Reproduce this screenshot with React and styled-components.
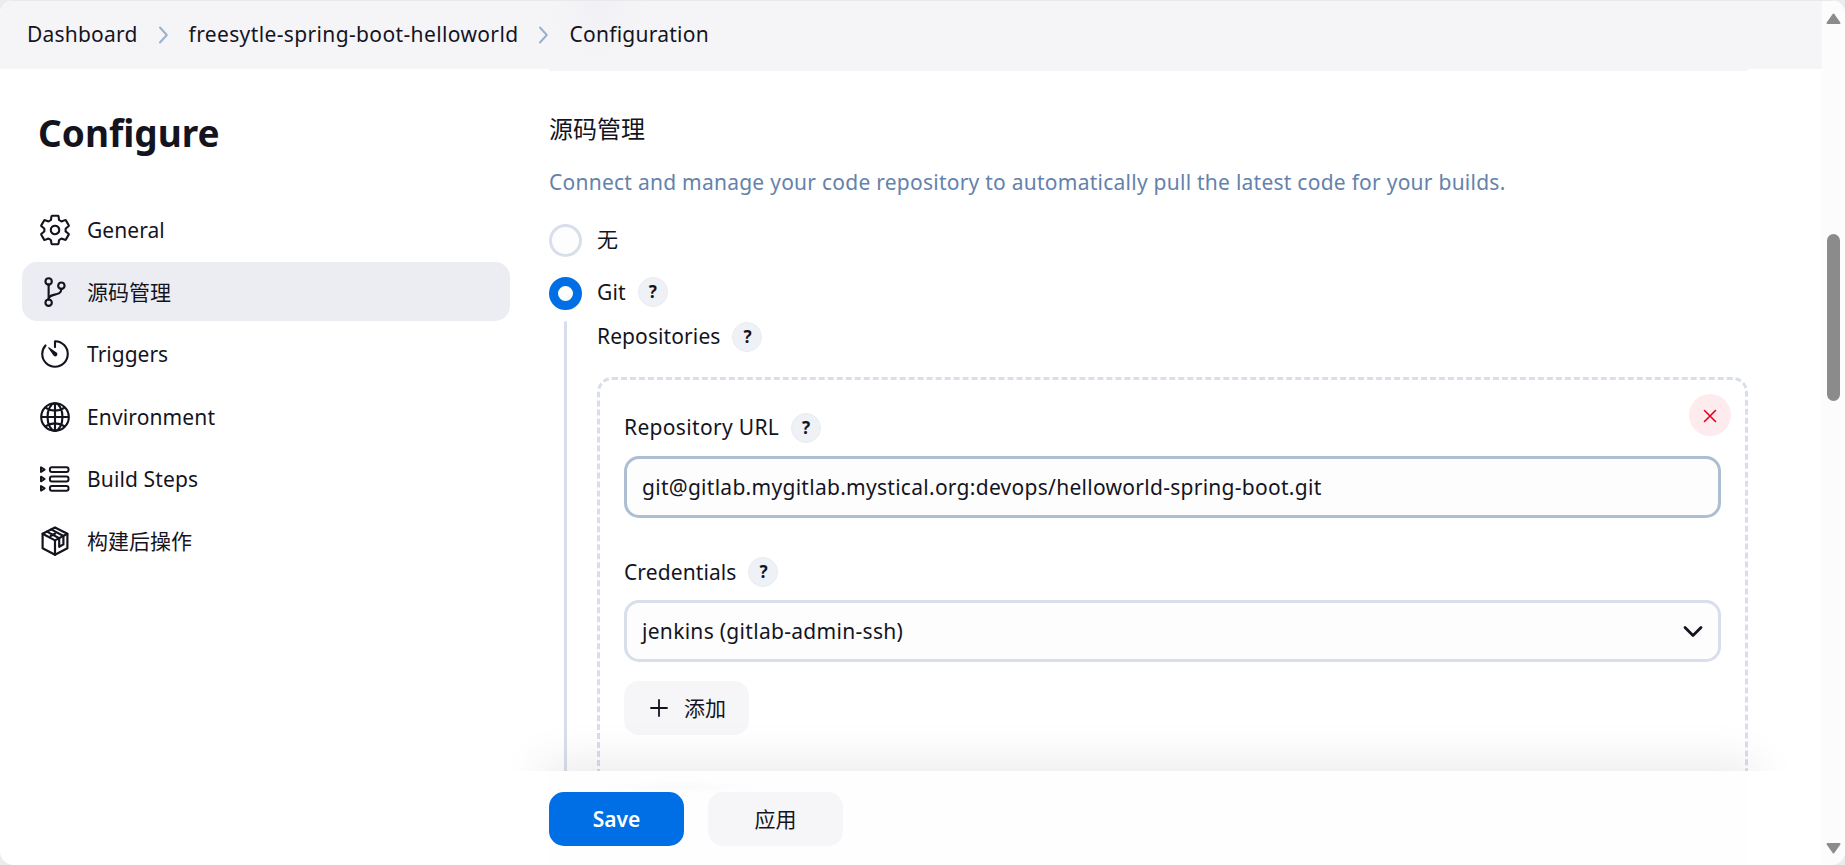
import React from "react";
import styled, { createGlobalStyle, css } from "styled-components";
import {
  IoSettingsOutline,
  IoGitBranchOutline,
  IoTimerOutline,
  IoGlobeOutline,
} from "react-icons/io5";

const ink = "#14141f";
const line = "#d8dfea";
const accent = "#006fe6";

const GlobalStyle = createGlobalStyle`
  *, *::before, *::after { box-sizing: border-box; }
  body {
    margin: 0;
    background: #ececee;
    color: ${ink};
    font-family: "Noto Sans", "Noto Sans CJK SC", sans-serif;
    font-size: 21px;
    line-height: 28px;
  }
`;

const Window = styled.div`
  display: flex;
  width: 1845px;
  height: 865px;
  overflow: hidden;
  background: #fff;
  border-radius: 14px;
`;

const Page = styled.div`
  display: flex;
  flex-direction: column;
  flex: 1;
  min-width: 0;
`;

const Text = styled.span`
  white-space: nowrap;
  letter-spacing: ${(p) => p.$track || 0}px;
`;

const Breadcrumbs = styled.header`
  display: flex;
  align-items: center;
  flex: none;
  height: 69px;
  padding: 0 0 2px 27px;
  border-top: 1px solid #e9e9ec;
  background: radial-gradient(circle at 598px 8px, #f1f1f5 0, #f5f5f8 46px);
`;

const CrumbArrow = styled.svg`
  width: 11px;
  height: 18px;
  margin: 1px 20px 0;
  fill: none;
  stroke: #9bb0ca;
  stroke-width: 2;
  stroke-linecap: round;
  stroke-linejoin: round;
`;

const Body = styled.div`
  display: flex;
  flex: 1;
  min-height: 0;
`;

const Sidebar = styled.aside`
  flex: none;
  width: 549px;
  padding: 39px 39px 0 22px;
`;

const Heading = styled.h1`
  margin: 0 0 42px;
  padding-left: 16px;
  font-size: 37px;
  font-weight: 700;
  line-height: 50px;
`;

const Nav = styled.nav`
  display: flex;
  flex-direction: column;
  gap: 3.4px;
`;

const NavItem = styled.a`
  display: flex;
  align-items: center;
  gap: 15px;
  height: 59px;
  padding-left: 16px;
  border-radius: 15px;
  background: ${(p) => (p.$active ? "#ecedf3" : "transparent")};

  svg {
    flex: none;
    width: 34px;
    height: 34px;
  }
`;

const Main = styled.main`
  display: flex;
  flex-direction: column;
  width: 1199px;
`;

const Scroll = styled.div`
  flex: 1;
  min-height: 0;
  overflow: hidden;
  border-top: 2px solid #f4f4f9;
`;

const SectionTitle = styled.h2`
  margin: 42px 0 22px;
  font-size: 24px;
  font-weight: 400;
  line-height: 32px;
`;

const Description = styled.p`
  margin: 0 0 27px;
  line-height: 30px;
  color: #6482aa;
`;

const RadioRow = styled.div`
  display: flex;
  gap: 15px;
  height: 33px;
  margin-bottom: ${(p) => p.$below}px;
`;

const Radio = styled.span`
  flex: none;
  width: 33px;
  height: 33px;
  border-radius: 50%;
  background: #fdfdfd;
  border: ${(p) => (p.$checked ? `9.5px solid ${accent}` : `3px solid ${line}`)};
`;

const LabelRow = styled.div`
  display: flex;
  align-items: center;
  gap: 12px;
  height: 30px;

  ${Text} {
    margin-bottom: ${(p) => (p.$level ? 0 : 2)}px;
  }
`;

const Help = styled.button`
  flex: none;
  width: 30px;
  height: 30px;
  padding: 0;
  border: 1px solid #e8ecf1;
  border-radius: 50%;
  background: #eef1f5;
  color: ${ink};
  font: 700 17px/28px "Noto Sans", sans-serif;
  text-align: center;
`;

const Nested = styled.div`
  display: flex;
  gap: 30px;
  height: 620px;
  margin-left: 15px;

  &::before {
    content: "";
    width: 3px;
    border-radius: 2px 2px 0 0;
    background: ${line};
  }
`;

const NestedContent = styled.div`
  flex: 1;
  padding-top: 1px;
`;

const Repository = styled.section`
  position: relative;
  height: 560px;
  margin-top: 25px;
  padding: 33px 24px;
  border: 3px dashed ${line};
  border-radius: 15px;
`;

const RemoveButton = styled.button`
  position: absolute;
  top: 14px;
  right: 14px;
  display: grid;
  place-items: center;
  width: 42px;
  height: 42px;
  padding: 1px 0 0;
  border: 0;
  border-radius: 50%;
  background: #fdebed;

  svg {
    width: 14px;
    height: 14px;
    stroke: #e6001f;
    stroke-width: 1.6;
    stroke-linecap: round;
  }
`;

const fieldBox = css`
  display: flex;
  align-items: center;
  justify-content: space-between;
  height: 62px;
  margin-top: 13px;
  padding: 0 15px 0 15px;
  border: 3px solid ${(p) => (p.$focused ? "#adbdd2" : line)};
  border-radius: 15px;
  background: #fdfdfd;
`;

const TextField = styled.div`
  ${fieldBox}
  margin-bottom: 39px;
`;

const SelectField = styled.div`
  ${fieldBox}
  margin-bottom: 19px;

  svg {
    width: 20px;
    height: 13px;
    fill: none;
    stroke: ${ink};
    stroke-width: 2.8;
    stroke-linecap: round;
    stroke-linejoin: round;
  }
`;

const Button = styled.button`
  display: inline-flex;
  align-items: center;
  justify-content: center;
  gap: 16px;
  width: ${(p) => p.$width}px;
  height: 54px;
  padding: 0 0 0 ${(p) => p.$inset || 0}px;
  border: 0;
  border-radius: 15px;
  background: ${(p) => (p.$primary ? accent : "#f6f6f9")};
  color: ${(p) => (p.$primary ? "#fff" : ink)};
  font: inherit;
  font-weight: ${(p) => (p.$primary ? 600 : 400)};

  svg {
    width: 18px;
    height: 18px;
    stroke: ${ink};
    stroke-width: 1.8;
    stroke-linecap: round;
  }
`;

const ActionBar = styled.footer`
  position: relative;
  display: flex;
  flex: none;
  gap: 24px;
  height: 94px;
  padding-top: 21px;
  background: radial-gradient(ellipse at 130px 16px, #fafafa 0, #fefefe 90px);

  &::before {
    content: "";
    position: absolute;
    inset: 0;
    box-shadow: 0 0 46px 8px rgba(0, 0, 0, 0.085);
    clip-path: inset(-60px -60px 100% -60px);
    pointer-events: none;
  }
`;

const ScrollTrack = styled.div`
  display: flex;
  flex-direction: column;
  align-items: center;
  flex: none;
  width: 23px;
  padding: 12px 0 11px;
  background: #fcfcfc;
  border-top: 1px solid #e9e9ec;

  svg {
    width: 15px;
    height: 12px;
    fill: #8b8b8b;
    stroke: #8b8b8b;
    stroke-width: 2;
    stroke-linejoin: round;
  }
`;

const Thumb = styled.div`
  width: 13px;
  height: 167px;
  margin: 209px 0 auto;
  border-radius: 7px;
  background: #8b8b8b;
`;

function Separator() {
  return (
    <CrumbArrow viewBox="0 0 11 18">
      <path d="M2 1.5 8.8 9 2 16.5" />
    </CrumbArrow>
  );
}

function BuildStepsIcon() {
  return (
    <svg viewBox="0 0 34 34" fill="none" stroke={ink} strokeWidth="2" strokeLinejoin="round">
      {[7.7, 17, 26.3].map((y) => (
        <g key={y}>
          <path d={`M3 ${y - 2.3}V${y + 2.3}L6.6 ${y}Z`} />
          <rect x="11.9" y={y - 2.4} width="18.6" height="4.8" rx="2" />
        </g>
      ))}
    </svg>
  );
}

function PackageIcon() {
  return (
    <svg viewBox="0 0 34 34" fill="none" stroke={ink} strokeWidth="2.2" strokeLinejoin="round" strokeLinecap="round">
      <path d="M17 3.4 29.4 9.8V24.2L17 30.8 4.6 24.2V9.8Z" />
      <path d="M4.6 9.8 17 16.4 29.4 9.8M17 16.4V30.8" />
      <path d="M13.2 5.4 25.4 12V20.4L21.2 22.8V14.2L9 7.6" />
      <path d="M17.2 9.6 12.6 12" />
    </svg>
  );
}

const navItems = [
  { label: "General", track: 0.05, icon: <IoSettingsOutline /> },
  { label: "源码管理", icon: <IoGitBranchOutline />, active: true },
  { label: "Triggers", icon: <IoTimerOutline /> },
  { label: "Environment", track: 0.13, icon: <IoGlobeOutline /> },
  { label: "Build Steps", track: 0.13, icon: <BuildStepsIcon /> },
  { label: "构建后操作", icon: <PackageIcon /> },
];

export default function App() {
  return (
    <>
      <GlobalStyle />
      <Window>
        <Page>
          <Breadcrumbs>
            <Text $track={0.2}>Dashboard</Text>
            <Separator />
            <Text $track={0.37}>freesytle-spring-boot-helloworld</Text>
            <Separator />
            <Text $track={0.25}>Configuration</Text>
          </Breadcrumbs>
          <Body>
            <Sidebar>
              <Heading>Configure</Heading>
              <Nav>
                {navItems.map((item) => (
                  <NavItem key={item.label} $active={item.active}>
                    {item.icon}
                    <Text $track={item.track}>{item.label}</Text>
                  </NavItem>
                ))}
              </Nav>
            </Sidebar>
            <Main>
              <Scroll>
                <SectionTitle>源码管理</SectionTitle>
                <Description>
                  <Text $track={0.25}>
                    Connect and manage your code repository to automatically pull the latest code for your builds.
                  </Text>
                </Description>
                <RadioRow $below={20}>
                  <Radio />
                  <LabelRow $level>
                    <Text>无</Text>
                  </LabelRow>
                </RadioRow>
                <RadioRow $below={11}>
                  <Radio $checked />
                  <LabelRow $level>
                    <Text $track={0.2}>Git</Text>
                    <Help>?</Help>
                  </LabelRow>
                </RadioRow>
                <Nested>
                  <NestedContent>
                    <LabelRow>
                      <Text $track={0.1}>Repositories</Text>
                      <Help>?</Help>
                    </LabelRow>
                    <Repository>
                      <RemoveButton>
                        <svg viewBox="0 0 14 14">
                          <path d="M1.5 1.5l11 11M12.5 1.5l-11 11" />
                        </svg>
                      </RemoveButton>
                      <LabelRow>
                        <Text $track={0.33}>Repository URL</Text>
                        <Help>?</Help>
                      </LabelRow>
                      <TextField $focused>
                        <Text $track={0.28}>git@gitlab.mygitlab.mystical.org:devops/helloworld-spring-boot.git</Text>
                      </TextField>
                      <LabelRow $level>
                        <Text $track={0.1}>Credentials</Text>
                        <Help>?</Help>
                      </LabelRow>
                      <SelectField>
                        <Text $track={0.3}>jenkins (gitlab-admin-ssh)</Text>
                        <svg viewBox="0 0 20 13">
                          <path d="M2 2.5 10 10.5 18 2.5" />
                        </svg>
                      </SelectField>
                      <Button $width={125} $inset={3}>
                        <svg viewBox="0 0 18 18">
                          <path d="M9 1v16M1 9h16" />
                        </svg>
                        <Text>添加</Text>
                      </Button>
                    </Repository>
                  </NestedContent>
                </Nested>
              </Scroll>
              <ActionBar>
                <Button $width={135} $primary>
                  <Text>Save</Text>
                </Button>
                <Button $width={135}>
                  <Text>应用</Text>
                </Button>
              </ActionBar>
            </Main>
          </Body>
        </Page>
        <ScrollTrack>
          <svg viewBox="0 0 15 12">
            <path d="M7.5 1.5 13.5 10H1.5Z" />
          </svg>
          <Thumb />
          <svg viewBox="0 0 15 12">
            <path d="M1.5 2H13.5L7.5 10.5Z" />
          </svg>
        </ScrollTrack>
      </Window>
    </>
  );
}
